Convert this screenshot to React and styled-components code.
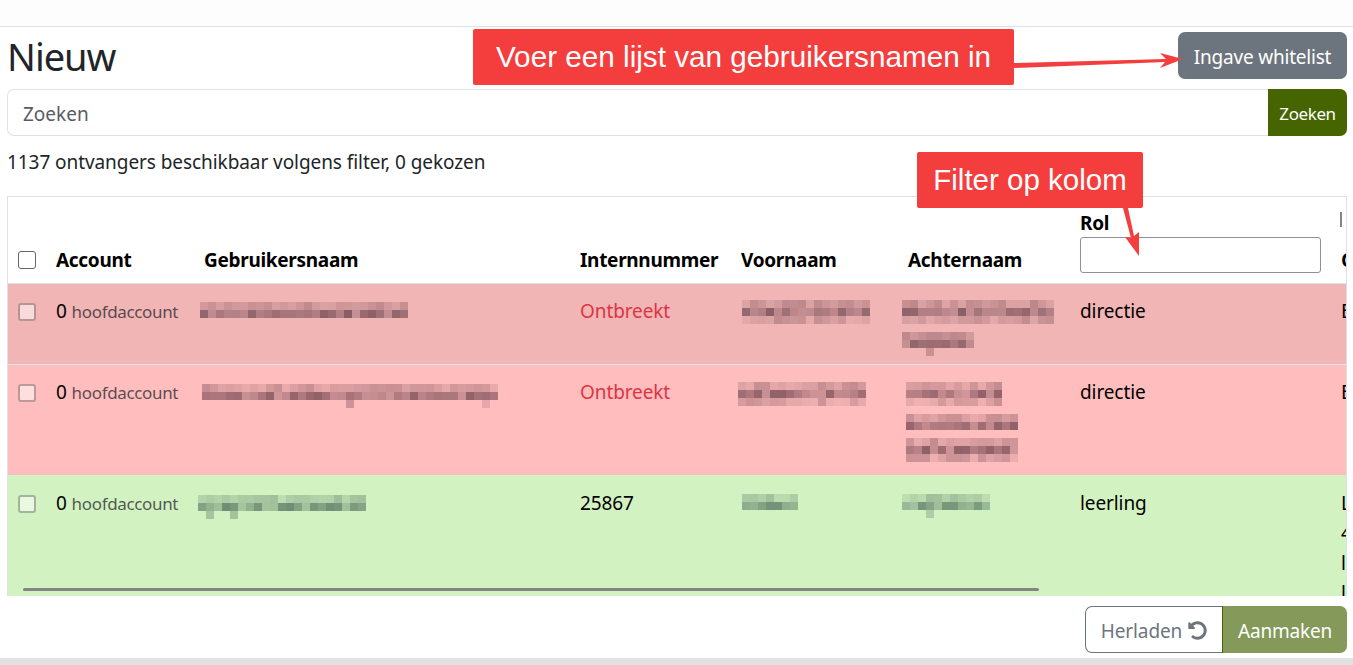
import React from 'react';
import styled, { createGlobalStyle } from 'styled-components';
import { FaUndoAlt } from 'react-icons/fa';

const COLUMNS = [40, 148, 376, 161, 167, 172, 261, 200];

const ROWS = [
  {
    tone: 'danger',
    user: { cols: 26, dy: 6, shift: -4, seed: 3 },
    number: 'Ontbreekt',
    first: [{ cols: 16, dy: 4, shift: 1, seed: 11, full: true }],
    last: [
      { cols: 19, dy: 4, shift: -6, seed: 17, full: true },
      { cols: 9, dy: 6, shift: -6, seed: 23 },
    ],
    role: 'directie',
    group: ['E'],
  },
  {
    tone: 'soft',
    user: { cols: 37, dy: 7, shift: -2, seed: 31 },
    number: 'Ontbreekt',
    first: [{ cols: 16, dy: 5, shift: -3, seed: 37, full: true }],
    last: [
      { cols: 12, dy: 5, shift: -2, seed: 41, full: true },
      { cols: 14, dy: 7, shift: -2, seed: 43 },
      { cols: 14, dy: 1, shift: -2, seed: 47, full: true },
    ],
    role: 'directie',
    group: ['E'],
  },
  {
    tone: 'success',
    user: { cols: 21, dy: 7, shift: -6, seed: 53 },
    number: '25867',
    first: [{ cols: 7, dy: 6, shift: 1, seed: 59, short: true }],
    last: [{ cols: 11, dy: 6, shift: -6, seed: 61 }],
    role: 'leerling',
    group: ['L', '4', 'l', 'l'],
  },
];

const TINTS = {
  danger: '96,60,70',
  soft: '100,60,70',
  success: '70,100,85',
};

function seeded(seed) {
  let value = seed * 9973 + 17;
  return () => {
    value = (value * 16807) % 2147483647;
    return (value % 1000) / 1000;
  };
}

function Mosaic({ cols, seed, tone, shift, short, full }) {
  const random = seeded(seed);
  const tint = TINTS[tone];
  const cells = [];
  for (let col = 0; col < cols; col++) {
    cells.push({ x: col, y: 0, o: 0.14 + random() * 0.24 });
    cells.push({ x: col, y: 1, o: 0.3 + random() * 0.42 });
    const tail = random();
    if (full) cells.push({ x: col, y: 2, o: 0.08 + tail * 0.26 });
    else if (!short && tail > 0.9) cells.push({ x: col, y: 2, o: 0.15 + random() * 0.2 });
  }
  return (
    <StMosaic $shift={shift} width={cols * 8} height={24} viewBox={`0 0 ${cols * 8} 24`}>
      {cells.map((c) => (
        <rect key={`${c.x}-${c.y}`} x={c.x * 8} y={c.y * 8} width="8" height="8" fill={`rgba(${tint},${c.o.toFixed(2)})`} />
      ))}
    </StMosaic>
  );
}

function BlurLine({ mosaic, tone }) {
  return (
    <StBlurLine $dy={mosaic.dy}>
      <Mosaic {...mosaic} tone={tone} />
    </StBlurLine>
  );
}

function Row({ row }) {
  return (
    <StRow $tone={row.tone}>
      <StCell>
        <StRowCheck type="checkbox" disabled />
      </StCell>
      <StCell>
        0 <StMuted>hoofdaccount</StMuted>
      </StCell>
      <StCell>
        <BlurLine mosaic={row.user} tone={row.tone} />
      </StCell>
      <StCell>{row.number === 'Ontbreekt' ? <StMissing>{row.number}</StMissing> : row.number}</StCell>
      <StCell>
        {row.first.map((m) => (
          <BlurLine key={m.seed} mosaic={m} tone={row.tone} />
        ))}
      </StCell>
      <StCell>
        {row.last.map((m) => (
          <BlurLine key={m.seed} mosaic={m} tone={row.tone} />
        ))}
      </StCell>
      <StCell>{row.role}</StCell>
      <StCell>
        {row.group.map((g, i) => (
          <div key={i}>{g}</div>
        ))}
      </StCell>
    </StRow>
  );
}

export default function App() {
  return (
    <StPage>
      <GlobalStyle />
      <StTopBar />
      <StMain>
        <StTitleRow>
          <StTitle>Nieuw</StTitle>
          <StWhitelistButton>Ingave whitelist</StWhitelistButton>
        </StTitleRow>
        <StSearch>
          <StSearchInput placeholder="Zoeken" />
          <StSearchButton>Zoeken</StSearchButton>
        </StSearch>
        <StCount>1137 ontvangers beschikbaar volgens filter, 0 gekozen</StCount>
        <StTableWrap>
          <StTable>
            <colgroup>
              {COLUMNS.map((w, i) => (
                <col key={i} width={w} />
              ))}
            </colgroup>
            <thead>
              <tr>
                <StHead>
                  <StHeadCheck type="checkbox" />
                </StHead>
                <StHead>Account</StHead>
                <StHead>Gebruikersnaam</StHead>
                <StHead>Internnummer</StHead>
                <StHead>Voornaam</StHead>
                <StHead>Achternaam</StHead>
                <StHead>
                  Rol
                  <StFilterInput />
                </StHead>
                <StHead>
                  <StFilterStub />
                  Groep
                </StHead>
              </tr>
            </thead>
            <tbody>
              {ROWS.map((row) => (
                <Row key={row.user.seed} row={row} />
              ))}
            </tbody>
          </StTable>
          <StScrollThumb />
        </StTableWrap>
        <StFooter>
          <StReloadButton>
            Herladen <FaUndoAlt size={19} />
          </StReloadButton>
          <StCreateButton>Aanmaken</StCreateButton>
        </StFooter>
      </StMain>
      <StBottomBar />

      <StCallout $left={473} $top={29} $width={541} $size={29.7}>
        Voer een lijst van gebruikersnamen in
      </StCallout>
      <StCallout $left={917} $top={152} $width={226} $size={29.5}>
        Filter op kolom
      </StCallout>
      <StArrows width="1353" height="665" viewBox="0 0 1353 665">
        <path d="M1013 63 L1166 59 L1160 53 L1183 59 L1160 68 L1165 62 L1013 68 Z" />
        <path d="M1123 208 L1128 208 L1134 236 L1139 232 L1139 256 L1125 237 L1131 238 Z" />
      </StArrows>
    </StPage>
  );
}

const GlobalStyle = createGlobalStyle`
  html, body {
    margin: 0;
    height: 100%;
    overflow: hidden;
    background: #fff;
  }
  body {
    font-family: "Noto Sans", "Open Sans", sans-serif;
    font-size: 19px;
    color: #212529;
  }
  * {
    box-sizing: border-box;
  }
`;

const StPage = styled.div`
  position: relative;
  display: flex;
  flex-direction: column;
  height: 665px;
`;

const StTopBar = styled.div`
  height: 27px;
  flex-shrink: 0;
  background: #fdfdfd;
  border-bottom: 1px solid #dee2e6;
`;

const StMain = styled.main`
  flex: 1;
  padding: 0 6px 0 7px;
`;

const StTitleRow = styled.div`
  display: flex;
  justify-content: space-between;
  align-items: flex-start;
  height: 62px;
  padding-top: 5px;
`;

const StTitle = styled.h1`
  margin: 0;
  font-size: 38px;
  font-weight: 400;
  line-height: 48px;
  letter-spacing: -1px;
`;

const StWhitelistButton = styled.button`
  width: 169px;
  height: 47px;
  padding: 2px 0 0;
  border: 0;
  border-radius: 7px;
  background: #6c757d;
  color: #fff;
  font: inherit;
  letter-spacing: -0.2px;
`;

const StSearch = styled.div`
  display: flex;
  height: 47px;
`;

const StSearchInput = styled.input`
  flex: 1;
  min-width: 0;
  padding: 2px 15px 0;
  border: 1px solid #dee2e6;
  border-right: 0;
  border-radius: 7px 0 0 7px;
  font: inherit;
  outline: none;

  &::placeholder {
    color: #595c5f;
  }
`;

const StSearchButton = styled.button`
  width: 79px;
  padding: 2px 0 0;
  border: 0;
  border-radius: 0 7px 7px 0;
  background: #466400;
  color: #fff;
  font: inherit;
  font-size: 17px;
  letter-spacing: -0.4px;
`;

const StCount = styled.p`
  height: 60px;
  margin: 0;
  padding-top: 13px;
  line-height: 26px;
  letter-spacing: -0.07px;
`;

const StTableWrap = styled.div`
  position: relative;
  height: 400px;
  overflow: hidden;
  border: 1px solid #dee2e6;
  border-bottom: 0;
`;

const StTable = styled.table`
  width: 1525px;
  table-layout: fixed;
  border-collapse: collapse;
  color: #000;
`;

const StHead = styled.th`
  height: 86px;
  padding: 0 8px 10px;
  border-bottom: 1px solid #dee2e6;
  text-align: left;
  vertical-align: bottom;
  font-weight: 700;
  line-height: 26px;
  letter-spacing: -0.3px;
  white-space: nowrap;
`;

const StHeadCheck = styled.input`
  display: block;
  width: 18px;
  height: 18px;
  margin: 0 0 4px 2px;
  appearance: none;
  background: #fff;
  border: 1.5px solid #666;
  border-radius: 3px;
`;

const StFilterInput = styled.input`
  display: block;
  width: 241px;
  height: 36px;
  margin-top: 1px;
  padding: 0 8px;
  border: 1px solid #8f8f9d;
  border-radius: 3px;
  background: #fff;
`;

const StFilterStub = styled.span`
  display: block;
  width: 2px;
  height: 15px;
  margin: 0 0 20px -1px;
  background: #858585;
`;

const ROW_COLORS = {
  danger: '#f2b5b5',
  soft: '#ffbdbd',
  success: '#d3f2c1',
};

const StRow = styled.tr`
  background: ${({ $tone }) => ROW_COLORS[$tone]};
  border-bottom: ${({ $tone }) => ($tone === 'danger' ? '1px solid #e3e6e8' : '0')};

  td {
    padding-top: ${({ $tone }) => ($tone === 'success' ? 13 : 12)}px;
  }
`;

const StCell = styled.td`
  padding: 12px 8px 8px;
  vertical-align: top;
  line-height: 30px;
  letter-spacing: -0.1px;
`;

const StRowCheck = styled.input`
  display: block;
  width: 18px;
  height: 18px;
  margin: 7px 0 0 2px;
  appearance: none;
  background: #fff;
  border: 2px solid #777;
  border-radius: 3px;
  opacity: 0.5;
`;

const StMuted = styled.span`
  color: rgba(33, 37, 41, 0.75);
  font-size: 17px;
  letter-spacing: -0.35px;
`;

const StMissing = styled.span`
  color: #dc3545;
`;

const StBlurLine = styled.div`
  height: 30px;
  padding-top: ${({ $dy }) => $dy}px;
`;

const StMosaic = styled.svg`
  display: block;
  margin-left: ${({ $shift }) => $shift}px;
`;

const StScrollThumb = styled.div`
  position: absolute;
  left: 15px;
  bottom: 5px;
  width: 1016px;
  height: 3px;
  border-radius: 2px;
  background: #858585;
`;

const StFooter = styled.div`
  display: flex;
  justify-content: flex-end;
  margin-top: 10px;
`;

const StReloadButton = styled.button`
  display: flex;
  align-items: center;
  justify-content: center;
  gap: 6px;
  width: 137px;
  height: 47px;
  padding: 2px 0 0;
  border: 1px solid #6c757d;
  border-right: 0;
  border-radius: 7px 0 0 7px;
  background: #fff;
  color: #6c757d;
  font: inherit;
  letter-spacing: -0.1px;
`;

const StCreateButton = styled.button`
  width: 125px;
  height: 47px;
  padding: 2px 0 0;
  border: 0;
  border-left: 1px solid #466400;
  border-radius: 0 7px 7px 0;
  background: #84995a;
  color: #fff;
  font: inherit;
  letter-spacing: -0.2px;
`;

const StBottomBar = styled.div`
  height: 7px;
  flex-shrink: 0;
  background: #e2e2e2;
`;

const StCallout = styled.div`
  position: absolute;
  left: ${({ $left }) => $left}px;
  top: ${({ $top }) => $top}px;
  width: ${({ $width }) => $width}px;
  height: 56px;
  border-radius: 2px;
  background: #f43e3e;
  color: #fff;
  font-family: "Liberation Sans", Arial, sans-serif;
  font-size: ${({ $size }) => $size}px;
  line-height: 56px;
  text-align: center;
  white-space: nowrap;
`;

const StArrows = styled.svg`
  position: absolute;
  left: 0;
  top: 0;
  pointer-events: none;

  path {
    fill: #f43e3e;
  }
`;
